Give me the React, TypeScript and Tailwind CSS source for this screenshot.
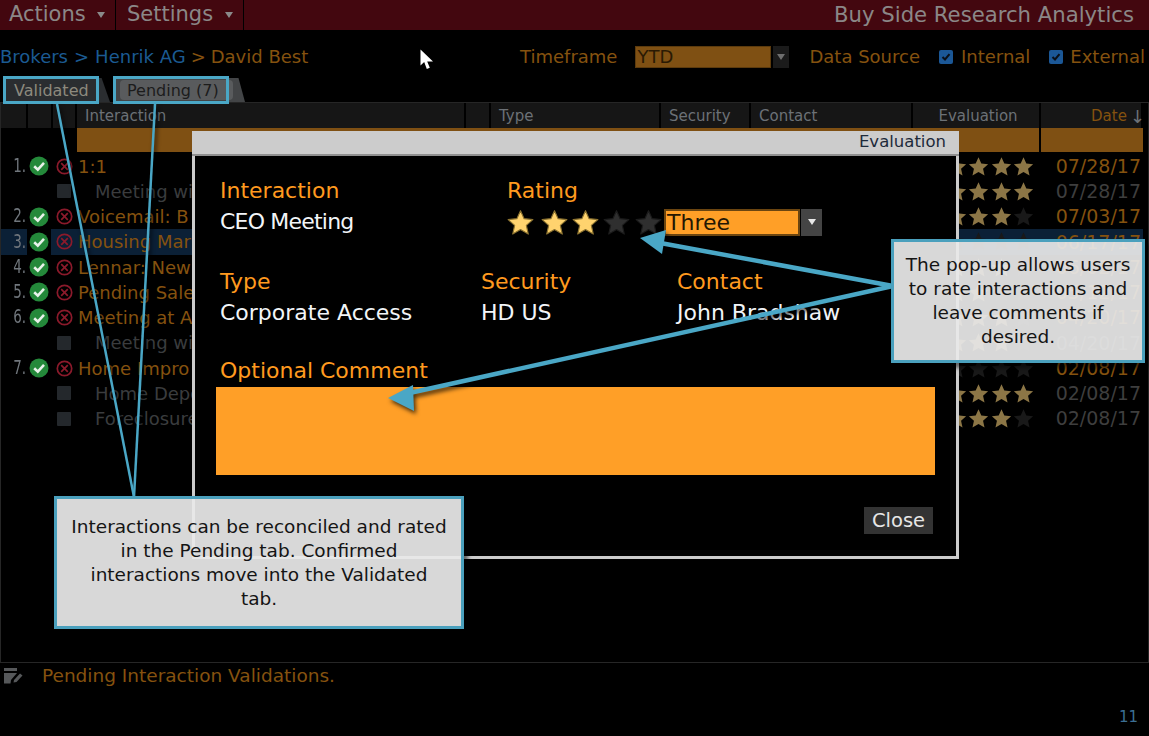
import type { ReactNode } from 'react';

type Row = {
  num?: string;
  text: string;
  stars: number;
  date: string;
  sub?: boolean;
  active?: boolean;
};

const rows: Row[] = [
  { num: '1.', text: '1:1', stars: 5, date: '07/28/17' },
  { text: 'Meeting wi', stars: 5, date: '07/28/17', sub: true },
  { num: '2.', text: 'Voicemail: B', stars: 4, date: '07/03/17' },
  { num: '3.', text: 'Housing Mark', stars: 0, date: '06/17/17', active: true },
  { num: '4.', text: 'Lennar: New', stars: 4, date: '06/02/17' },
  { num: '5.', text: 'Pending Sale', stars: 3, date: '05/12/17' },
  { num: '6.', text: 'Meeting at A', stars: 4, date: '04/20/17' },
  { text: 'Meeting wi', stars: 4, date: '04/20/17', sub: true },
  { num: '7.', text: 'Home Impro', stars: 0, date: '02/08/17' },
  { text: 'Home Depo', stars: 5, date: '02/08/17', sub: true },
  { text: 'Foreclosure', stars: 4, date: '02/08/17', sub: true },
];

const Star = ({ size, fill, stroke }: { size: number; fill: string; stroke?: string }) => (
  <svg width={size} height={size} viewBox="0 0 24 24" className="shrink-0">
    <polygon
      points="12,1.5 15.2,8.6 23,9.4 17.2,14.6 18.9,22.3 12,18.3 5.1,22.3 6.8,14.6 1,9.4 8.8,8.6"
      fill={fill}
      stroke={stroke}
      strokeWidth="1"
      strokeLinejoin="round"
    />
  </svg>
);

const CheckIcon = () => (
  <svg width="20" height="20" viewBox="0 0 20 20" className="shrink-0">
    <circle cx="10" cy="10" r="9.5" fill="#24893a" />
    <path d="M5.2 10.2 L8.8 13.6 L15 6.8" fill="none" stroke="#e8f2ea" strokeWidth="2.6" />
  </svg>
);

const RejectIcon = () => (
  <svg width="17" height="17" viewBox="0 0 17 17" className="shrink-0">
    <circle cx="8.5" cy="8.5" r="7.2" fill="none" stroke="#8b1a2b" strokeWidth="1.7" />
    <path d="M5.2 5.2 L11.8 11.8 M11.8 5.2 L5.2 11.8" stroke="#8b1a2b" strokeWidth="1.7" />
  </svg>
);

const Caret = ({ color = '#8a8a8a' }: { color?: string }) => (
  <svg width="8" height="6" viewBox="0 0 8 6">
    <polygon points="0,0 8,0 4,6" fill={color} />
  </svg>
);

const CheckBox = () => (
  <span className="flex h-[14px] w-[14px] items-center justify-center rounded-[2px] bg-[#1b5796]">
    <svg width="10" height="10" viewBox="0 0 10 10">
      <path d="M1.5 5 L4 7.5 L8.5 2.2" fill="none" stroke="#0a0f16" strokeWidth="2" />
    </svg>
  </span>
);

const HeadCell = ({ className, children }: { className: string; children?: ReactNode }) => (
  <div className={`flex h-full shrink-0 items-center border-r-2 border-black bg-[#161616] pt-px text-[15px] text-[#6c7176] ${className}`}>
    {children}
  </div>
);

const TableRow = ({ row }: { row: Row }) => (
  <div className={`flex h-[25.25px] items-center ${row.active ? 'bg-[#0b2036]' : ''}`}>
    <div className="flex w-[26px] shrink-0 justify-end pr-px font-['DejaVu_Sans_Condensed','DejaVu_Sans',sans-serif] text-[15px] text-[#70767c]">
      <span className="inline-block scale-y-[1.25]">{row.num}</span>
    </div>
    <div className={`flex h-full w-[24px] shrink-0 items-center justify-center ${row.active ? 'bg-black' : ''}`}>
      {row.num && <CheckIcon />}
    </div>
    <div className="flex w-[26px] shrink-0 items-center justify-center">
      {row.num ? <RejectIcon /> : <span className="h-[14px] w-[14px] rounded-[1px] bg-[#24282c]" />}
    </div>
    <div className={`flex-1 whitespace-nowrap text-[18px] ${row.sub ? 'pl-[18px] text-[#3a3c3e]' : 'pl-px text-[#85520f]'}`}>{row.text}</div>
    <div className="flex w-[120px] shrink-0 items-center justify-end pr-[5px]">
      {[0, 1, 2, 3, 4].map((i) => (
        <span key={i} className="flex w-[22.5px] justify-center">
          <Star size={21} fill={i < row.stars ? '#8c7646' : '#191919'} />
        </span>
      ))}
    </div>
    <div className={`w-[103px] shrink-0 whitespace-nowrap pr-[2px] text-right text-[19px] ${row.sub ? 'text-[#3e3e3e]' : 'text-[#85520f]'}`}>{row.date}</div>
  </div>
);

const App = () => {
  return (
    <div className="relative flex h-[736px] w-[1149px] flex-col overflow-hidden bg-black font-['DejaVu_Sans',sans-serif]">
      {/* title bar */}
      <div className="flex h-[30px] shrink-0 items-center bg-[#43070f] text-[21px] text-[#8b8787]">
        <div className="flex h-full w-[116px] items-center gap-[11px] border-r border-black pl-[9px]">
          Actions <Caret />
        </div>
        <div className="flex h-full w-[128px] items-center gap-[12px] border-r border-black pl-[11px]">
          Settings <Caret />
        </div>
        <div className="ml-auto pr-[15px] text-[21.2px]">Buy Side Research Analytics</div>
      </div>

      {/* breadcrumb + filters */}
      <div className="flex h-[46px] shrink-0 items-center pt-[7px] text-[18px] text-[#85520f]">
        <div className="flex w-[306px] shrink-0 items-center whitespace-nowrap">
          <span className="text-[#1b5a92]">Brokers</span>
          <span className="mx-[6px] text-[#1b5a92]">&gt;</span>
          <span className="text-[#1b5a92]">Henrik AG</span>
          <span className="mx-[5px]">&gt;</span>
          <span>David Best</span>
        </div>
        <span className="ml-[214px] whitespace-nowrap">Timeframe</span>
        <div className="ml-[18px] flex h-[22px] w-[136px] items-center border border-[#5d3b0d] bg-[#7f5013] pl-[1px] text-[#2a1a04]">YTD</div>
        <div className="ml-[2px] flex h-[22px] w-[16px] items-center justify-center bg-[#1b1b1b]">
          <Caret color="#6f6f6f" />
        </div>
        <span className="ml-[20px] whitespace-nowrap">Data Source</span>
        <span className="ml-[19px]"><CheckBox /></span>
        <span className="ml-[8px]">Internal</span>
        <span className="ml-[19px]"><CheckBox /></span>
        <span className="ml-[7px] whitespace-nowrap">External</span>
      </div>

      {/* tabs */}
      <div className="flex h-[26px] shrink-0 items-end pl-[5px] text-[16px]">
        <div className="flex h-[24px] w-[105px] items-center bg-[#2a2d30] pl-[9px] pt-[2px] text-[#8d8a7e] [clip-path:polygon(0_0,92%_0,100%_100%,0_100%)]">Validated</div>
        <div className="ml-[5px] flex h-[24px] w-[130px] items-center bg-[#434547] pl-[5px] [clip-path:polygon(0_0,95%_0,100%_100%,0_100%)]">
          <div className="flex h-[20px] w-[113px] items-center rounded-[4px] bg-[#595b5d] pl-[7px] pt-[2px] text-[#1c1c1c]">Pending (7)</div>
        </div>
      </div>

      {/* table */}
      <div className="flex min-h-0 flex-1 flex-col border-x border-t border-[#262626] pr-[5px]">
        <div className="flex h-[25px] shrink-0">
          <HeadCell className="w-[27px]" />
          <HeadCell className="w-[25px]" />
          <HeadCell className="w-[24px]" />
          <HeadCell className="w-[389px] pl-[8px]">Interaction</HeadCell>
          <HeadCell className="w-[25px]" />
          <HeadCell className="w-[170px] pl-[8px]">Type</HeadCell>
          <HeadCell className="w-[90px] pl-[8px]">Security</HeadCell>
          <HeadCell className="w-[162px] pl-[8px]">Contact</HeadCell>
          <HeadCell className="w-[128px] justify-center pl-[4px]">Evaluation</HeadCell>
          <HeadCell className="flex-1 justify-end gap-[3px] border-r-0 text-[#85520f]">
            Date <span className="-mr-[4px] text-[18px] text-[#6c7176]">↓</span>
          </HeadCell>
        </div>
        <div className="flex h-[24px] shrink-0 pl-[76px]">
          <div className="flex-1 border-r-2 border-black bg-[#7f5013]" />
          <div className="w-[102px] bg-[#7f5013]" />
        </div>
        <div className="pt-[1.5px]">
          {rows.map((row, i) => (
            <TableRow key={i} row={row} />
          ))}
        </div>
      </div>

      {/* status line */}
      <div className="flex h-[74px] shrink-0 flex-col border-t border-[#262626]">
        <div className="flex h-[26px] items-center">
          <svg width="20" height="18" viewBox="0 0 20 18" className="ml-[3px] shrink-0">
            <path d="M1 1 H14 V4 H1 Z" fill="#56585a" />
            <path d="M1 6 H14 L8 13 L7.5 16.5 L1 16.5 Z" fill="#56585a" />
            <path d="M11 13 L17 6.5 L19.5 8.5 L13.5 15 L10.5 15.5 Z" fill="#56585a" />
          </svg>
          <span className="ml-[19px] whitespace-nowrap text-[18.5px] text-[#85520f]">Pending Interaction Validations.</span>
        </div>
        <div className="mt-auto self-end pb-[8px] pr-[11px] text-[15px] text-[#3c6f93]">11</div>
      </div>

      {/* evaluation pop-up */}
      <div className="absolute left-[192px] top-[131px] flex h-[428px] w-[767px] flex-col border-[3px] border-t-0 border-[#cccccc] bg-black">
        <div className="-mx-[3px] flex h-[25px] shrink-0 items-center justify-end rounded-t-[2px] border-b-2 border-[#8f8f8f] bg-[#cccccc] pr-[13px] text-[16.5px] text-[#1d2a3a]">
          Evaluation
        </div>
        <div className="flex flex-1 flex-col pl-[25px] text-[22px]">
          <div className="mt-[21px] flex">
            <div className="w-[287px]">
              <div className="leading-[28px] text-[#ff9a1f]">Interaction</div>
              <div className="leading-[34px] tracking-[-0.8px] text-[#f2f5f8]">CEO Meeting</div>
            </div>
            <div>
              <div className="leading-[28px] text-[#ff9a1f]">Rating</div>
              <div className="flex h-[34px] items-center">
                <div className="flex w-[157px]">
                  {[0, 1, 2, 3, 4].map((i) => (
                    <span key={i} className="flex w-[31.5px] justify-center first:justify-start">
                      <Star size={27} fill={i < 3 ? '#ffd36e' : '#2f2f2f'} stroke={i < 3 ? '#8c7330' : '#1c1c1c'} />
                    </span>
                  ))}
                </div>
                <div className="flex h-[27px] w-[136px] items-center border-2 border-[#6b4510] bg-[#ff9f27] pl-[1px] text-[#241703]">Three</div>
                <div className="ml-[1px] flex h-[27px] w-[21px] items-center justify-center bg-[#444444]">
                  <Caret color="#e8e8e8" />
                </div>
              </div>
            </div>
          </div>
          <div className="mt-[29px] flex">
            <div className="w-[261px]">
              <div className="leading-[28px] text-[#ff9a1f]">Type</div>
              <div className="leading-[34px] text-[#f2f5f8]">Corporate Access</div>
            </div>
            <div className="w-[196px]">
              <div className="leading-[28px] text-[#ff9a1f]">Security</div>
              <div className="leading-[34px] text-[#f2f5f8]">HD US</div>
            </div>
            <div>
              <div className="leading-[28px] text-[#ff9a1f]">Contact</div>
              <div className="leading-[34px] text-[#f2f5f8]">John Bradshaw</div>
            </div>
          </div>
          <div className="mt-[27px] leading-[28px] text-[#ff9a1f]">Optional Comment</div>
          <div className="-ml-[4px] mt-[2px] h-[88px] w-[719px] bg-[#ff9f27]" />
          <div className="ml-[644px] mt-[32px] flex h-[27px] w-[69px] items-center justify-center bg-[#333333] text-[19.5px] text-[#e6e6e6]">Close</div>
        </div>
      </div>

      {/* tab highlights */}
      <div className="absolute left-[3px] top-[76px] h-[28px] w-[96px] border-[3px] border-[#4aa7c6]" />
      <div className="absolute left-[113px] top-[76px] h-[28px] w-[116px] border-[3px] border-[#4aa7c6]" />

      {/* arrows */}
      <svg width="1149" height="736" viewBox="0 0 1149 736" className="pointer-events-none absolute left-0 top-0 drop-shadow-[2px_3px_2px_rgba(0,0,0,0.7)]">
        <g stroke="#4aa7c6" fill="none">
          <path d="M134 497 L57 104" strokeWidth="2.5" />
          <path d="M134 497 L155 104" strokeWidth="2.5" />
          <path d="M893 286 L655 242" strokeWidth="4.5" />
          <path d="M893 286 L405 394" strokeWidth="4.5" />
        </g>
        <polygon points="640,238 666,230 662,254" fill="#4aa7c6" />
        <polygon points="388,398 413,385 414,411" fill="#4aa7c6" />
      </svg>

      {/* mouse pointer */}
      <svg width="14" height="22" viewBox="0 0 14 22" className="absolute left-[420px] top-[49px]">
        <path d="M0.5 0.5 V16.5 L4.2 13 L6.8 20 L9.8 18.8 L7.2 12.4 H13 Z" fill="#ffffff" />
      </svg>

      {/* callouts */}
      <div className="absolute left-[891px] top-[239px] flex h-[124px] w-[254px] items-center justify-center border-[3px] border-[#4aa0bd] bg-[#e8e8e8]/[0.93] text-center text-[18.5px] leading-[24px] text-[#141414] shadow-[4px_5px_4px_rgba(0,0,0,0.5)]">
        <p>
          The pop-up allows users
          <br />
          to rate interactions and
          <br />
          leave comments if
          <br />
          desired.
        </p>
      </div>
      <div className="absolute left-[54px] top-[496px] flex h-[133px] w-[410px] items-center justify-center border-[3px] border-[#4aa0bd] bg-[#e8e8e8]/[0.93] text-center text-[18.5px] leading-[24px] text-[#141414] shadow-[4px_5px_4px_rgba(0,0,0,0.5)]">
        <p>
          Interactions can be reconciled and rated
          <br />
          in the Pending tab. Confirmed
          <br />
          interactions move into the Validated
          <br />
          tab.
        </p>
      </div>
    </div>
  );
};

export default App;
